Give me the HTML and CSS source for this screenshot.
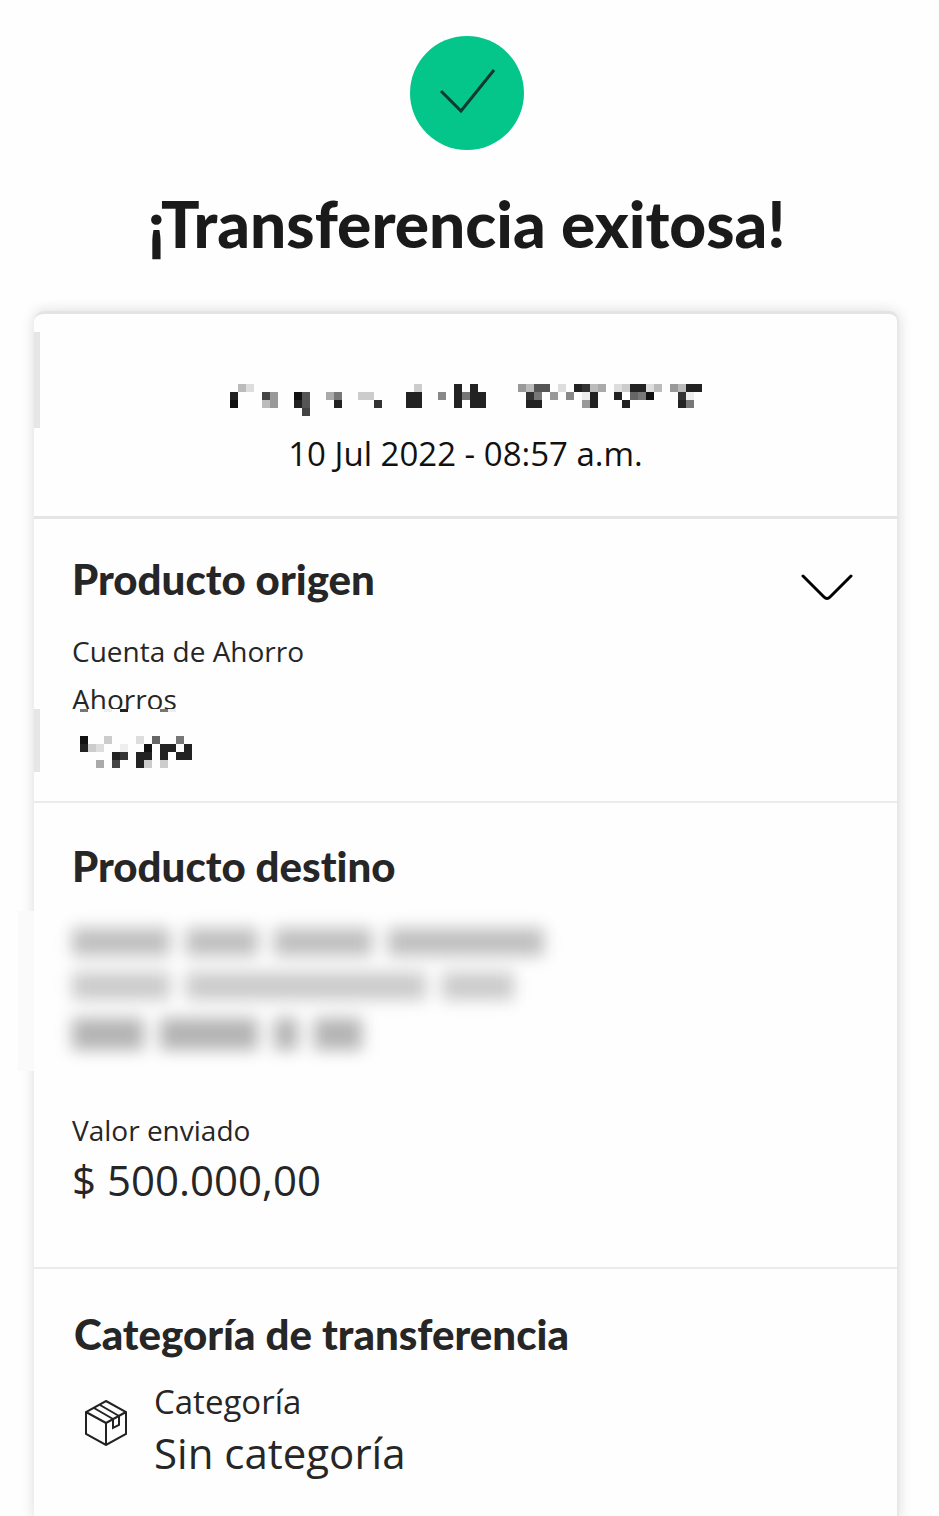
FILE: index.html
```html
<!DOCTYPE html>
<html lang="es">
  <head>
    <meta charset="UTF-8" />
    <meta name="viewport" content="width=device-width, initial-scale=1" />
    <title>Transferencia exitosa</title>
    <link rel="stylesheet" href="styles.css">
  </head>
  <body>
    <header class="result">
      <svg class="result-icon" viewBox="0 0 114 114" aria-hidden="true">
        <circle cx="57" cy="57" r="57" fill="#04c58a" />
        <path d="M31 55 L51 75 L84 34" fill="none" stroke="#12392f" stroke-width="3" />
      </svg>
      <h1>¡Transferencia exitosa!</h1>
    </header>

    <main class="card">
      <section class="summary">
        <svg class="mosaic" id="voucherMosaic" width="472" height="32" viewBox="0 0 472 32" aria-hidden="true"></svg>
        <p class="date">10 Jul 2022 - 08:57 a.m.</p>
      </section>

      <section class="origin">
        <div class="section-head">
          <h2>Producto origen</h2>
          <button class="toggle" type="button" aria-label="Ver detalle">
            <svg width="52" height="28" viewBox="0 0 52 28">
              <path d="M2 2 L23 23 Q26 26 29 23 L50 2" fill="none" stroke="#000" stroke-width="3" stroke-linecap="round" />
            </svg>
          </button>
        </div>
        <p class="label">Cuenta de Ahorro</p>
        <p class="label">Ahorros</p>
        <svg class="mosaic" id="accountMosaic" width="120" height="60" viewBox="-8 0 120 60" aria-hidden="true"></svg>
      </section>

      <section class="target">
        <h2>Producto destino</h2>
        <div class="hidden-data" aria-hidden="true">
          <div class="hidden-line">
            <span class="w-l"></span><span class="w-m"></span><span class="w-l"></span><span class="w-xl"></span>
          </div>
          <div class="hidden-line light">
            <span class="w-l"></span><span class="w-xxl"></span><span class="w-m"></span>
          </div>
          <div class="hidden-line dark">
            <span class="w-m"></span><span class="w-l"></span><span class="w-xs"></span><span class="w-s"></span>
          </div>
        </div>
        <p class="label">Valor enviado</p>
        <p class="value">$ 500.000,00</p>
      </section>

      <section class="category">
        <h2>Categoría de transferencia</h2>
        <div class="category-row">
          <svg class="box-icon" width="44" height="46" viewBox="0 0 44 46" fill="none" stroke="#222" stroke-width="2" aria-hidden="true">
            <path d="M22 1 L42 12 V34 L22 45 L2 34 V12 Z" />
            <path d="M2 12 L22 23 L42 12 M22 23 V45" />
            <path d="M16 5 L35 16 M10 8 L29 19" />
            <path d="M29 19 V28 L35 25 V16" />
          </svg>
          <div>
            <p class="category-label">Categoría</p>
            <p class="value">Sin categoría</p>
          </div>
        </div>
      </section>
    </main>

    <script>
      const cell = 8

      // each entry is a column followed by one hex digit of grey
      const voucher = [
        '1b 2d 23c 282 302 369 37b 385 395 41d 432 443 45b 46a 48d 49c 502 512 52d 53b 559 56b 572 582',
        '02 44 59 81 95 12a 137 16c 17c 222 232 268 282 297 302 312 373 387 409 428 44e 452 482 506 517 521 563 57e',
        '01 4b 59 82 95 132 183 222 232 282 302 312 372 382 449 452 492 562 577',
        '94',
      ]
      const account = [
        '01 3c 7d 96 127',
        '02 1c 2d 5e 81 102 112 132',
        '42 53 72 82 102 122 132',
        '2a 44 72 8c 10c',
      ]

      function drawRow(svg, row, y, height) {
        row.split(' ').forEach((item) => {
          const shade = item.slice(-1)
          const rect = document.createElementNS('http://www.w3.org/2000/svg', 'rect')
          rect.setAttribute('x', Number(item.slice(0, -1)) * cell)
          rect.setAttribute('y', y)
          rect.setAttribute('width', cell)
          rect.setAttribute('height', height)
          rect.setAttribute('fill', '#' + shade.repeat(3))
          svg.appendChild(rect)
        })
      }

      const voucherMosaic = document.getElementById('voucherMosaic')
      const accountMosaic = document.getElementById('accountMosaic')

      voucher.forEach((row, i) => drawRow(voucherMosaic, row, i * cell, cell))
      drawRow(accountMosaic, '07 3e 52 107 11e', 0, 3)
      account.forEach((row, i) => drawRow(accountMosaic, row, 27 + i * cell, cell))
    </script>
  </body>
</html>
```
FILE: styles.css
```css
* {
  box-sizing: border-box;
}

body {
  margin: 0;
  padding: 36px 40px 0 34px;
  min-height: 100vh;
  display: flex;
  flex-direction: column;
  background-color: #fefefe;
  color: #262626;
  font-family: 'Open Sans', 'Noto Sans', sans-serif;
}

h1,
h2,
p {
  margin: 0;
}

h1,
h2 {
  font-family: Lato, 'Open Sans', sans-serif;
  font-weight: 900;
  font-variant-ligatures: none;
}

h1 {
  margin-top: 36px;
  font-size: 64px;
  line-height: 76px;
  color: #1a1a1a;
}

h2 {
  font-size: 42px;
  line-height: 48px;
}

.result {
  text-align: center;
}

.result-icon {
  display: block;
  width: 114px;
  margin: 0 auto;
}

.card {
  flex: 1;
  margin-top: 49px;
  border-top: 3px solid #e4e4e4;
  border-right: 2px solid #e8e8e8;
  border-radius: 10px 10px 0 0;
  background-color: #fefefe;
  box-shadow: 0 0 14px rgba(0, 0, 0, 0.14);
}

.card section {
  position: relative;
  padding: 38px;
  border-bottom: 2px solid #ebebeb;
}

.card section.summary {
  padding: 70px 0 38px;
  border-bottom: 3px solid #e3e6e5;
  text-align: center;
}

.mosaic {
  display: block;
}

.summary .mosaic {
  margin: 0 auto 14px;
}

.date {
  font-size: 33px;
  line-height: 48px;
  color: #111;
}

.section-head {
  display: flex;
  justify-content: space-between;
  align-items: center;
  margin-bottom: 24px;
}

.toggle {
  margin: 18px 6px 0 0;
  padding: 0;
  height: 28px;
  border: none;
  background: none;
  cursor: pointer;
}

.toggle svg {
  display: block;
}

.card section.origin {
  padding-top: 36px;
  padding-bottom: 32px;
}

/* the censored number covers the foot of the line above it */
.origin .mosaic {
  position: relative;
  margin-top: -14px;
  background-color: #fefefe;
}

.label {
  font-size: 28px;
  line-height: 48px;
}

.value {
  font-size: 42px;
  line-height: 52px;
}

/* grey edge left by the scroll marks */
.summary::before,
.origin::before {
  content: '';
  position: absolute;
  left: 0;
  top: 18px;
  width: 6px;
  height: 96px;
  background-color: #e6e6e6;
}

.origin::before {
  top: auto;
  bottom: 29px;
  height: 63px;
}

.target::before {
  content: '';
  position: absolute;
  left: -16px;
  top: 108px;
  width: 16px;
  height: 160px;
  background-color: #fafafa;
}

.hidden-data {
  margin: 30px 0 46px;
  filter: blur(8px);
}

.hidden-line {
  display: flex;
  align-items: center;
  gap: 16px;
  height: 44px;
}

.hidden-line span {
  height: 28px;
  background-color: #c0c0c0;
}

.hidden-line.light span {
  background-color: #cbcbcb;
}

.hidden-line.dark {
  height: 52px;
}

.hidden-line.dark span {
  height: 32px;
  background-color: #b4b4b4;
}

.hidden-line .w-xs {
  width: 24px;
}

.hidden-line .w-s {
  width: 48px;
}

.hidden-line .w-m {
  width: 72px;
}

.hidden-line .w-l {
  width: 98px;
}

.hidden-line .w-xl {
  width: 156px;
}

.hidden-line .w-xxl {
  width: 240px;
}

.card section.target {
  padding-top: 39px;
  padding-bottom: 61px;
}

.card section.category {
  padding: 41px 40px;
  border-bottom: none;
}

.category-row {
  display: flex;
  gap: 26px;
  margin-top: 19px;
}

.box-icon {
  margin: 23px 0 0 10px;
}

.category-label {
  font-size: 33px;
  line-height: 50px;
}
```
